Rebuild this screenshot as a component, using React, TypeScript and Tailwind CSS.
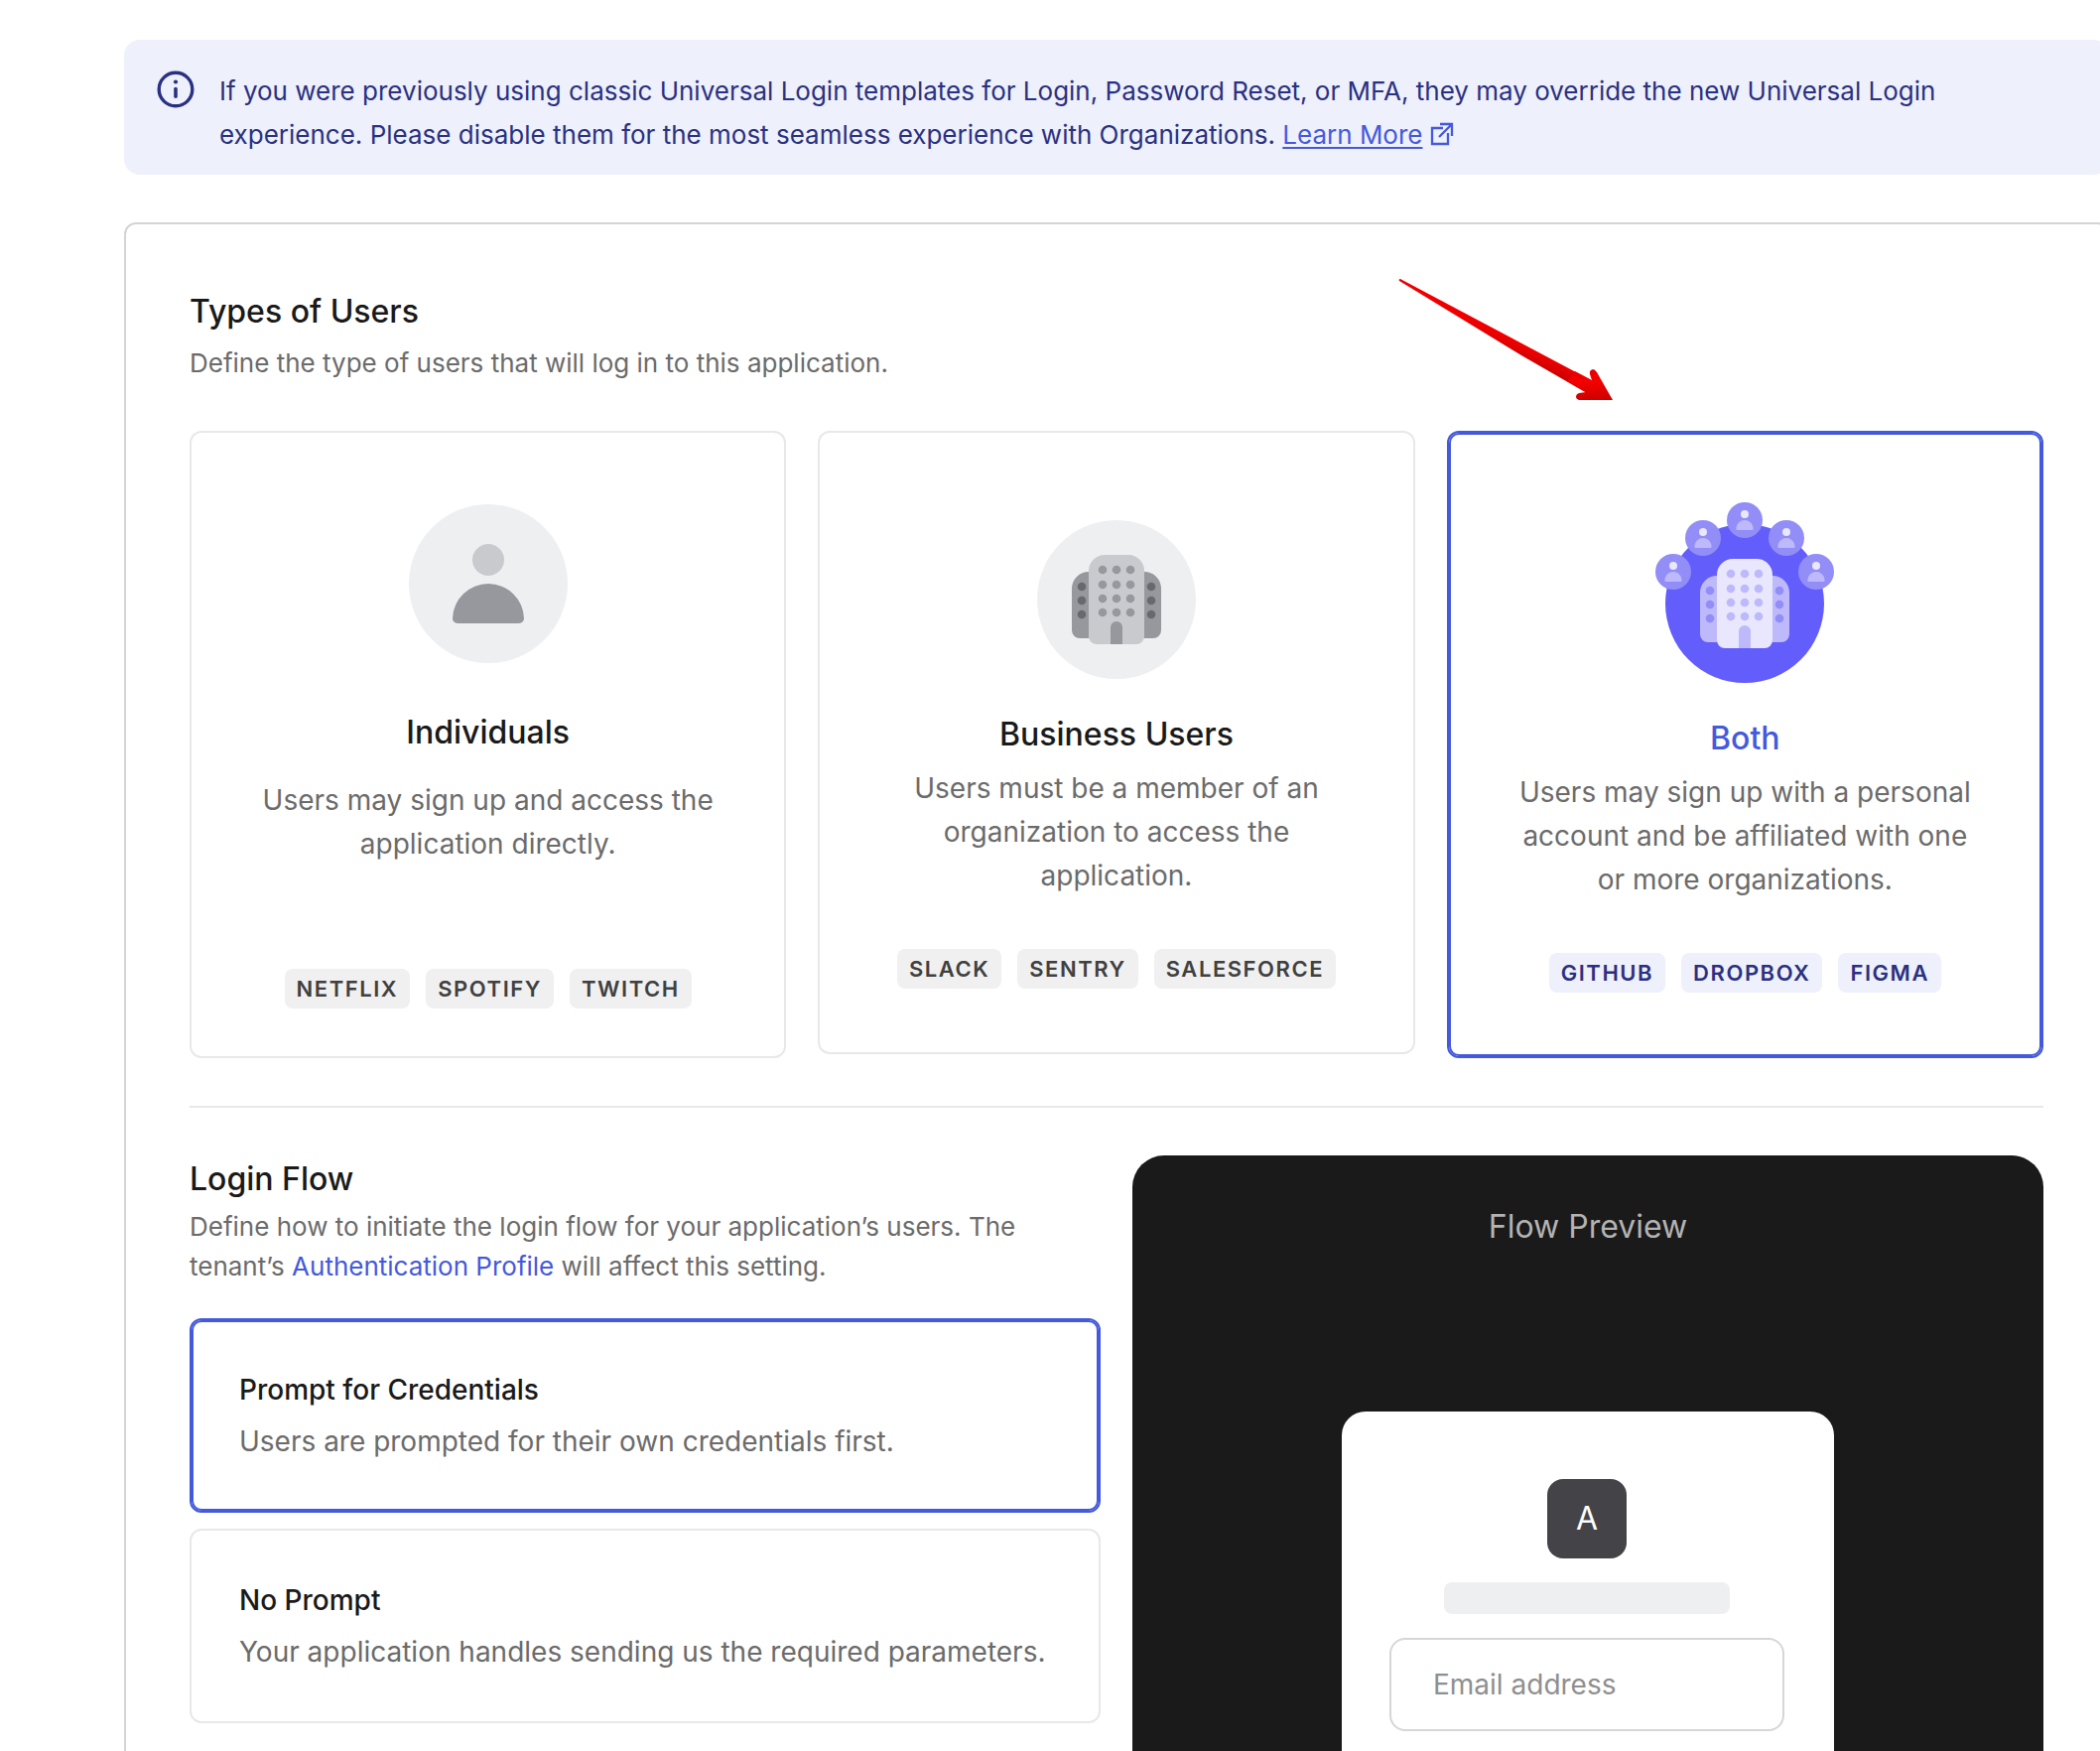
import React from "react";

const dotRows = [15, 30, 44, 58];
const sideRows = [32, 46, 60];

type Palette = { wall: string; windows: string; wing: string; wingWindows: string };

/* Office building, 90 x 90 units, drawn from its top-left corner. */
function Building({ c }: { c: Palette }) {
  return (
    <g>
      <path d="M17 17h0.500v67H8a8 8 0 0 1-8-8V34A17 17 0 0 1 17 17z" fill={c.wing} />
      <path d="M73 17h-0.500v67H82a8 8 0 0 0 8-8V34A17 17 0 0 0 73 17z" fill={c.wing} />
      <path d="M33 0h24a16 16 0 0 1 16 16v66a8 8 0 0 1-8 8H25a8 8 0 0 1-8-8V16A16 16 0 0 1 33 0z" fill={c.wall} />
      {dotRows.map((y) =>
        [31, 45, 59].map((x) => <circle key={`${x}-${y}`} cx={x} cy={y} r="4.300" fill={c.windows} />)
      )}
      {sideRows.map((y) =>
        [10, 80].map((x) => <circle key={`${x}-${y}`} cx={x} cy={y} r="4.300" fill={c.wingWindows} />)
      )}
      <path d="M39 90V73a6 6 0 0 1 12 0v17z" fill={c.windows} />
    </g>
  );
}

function IndividualIcon() {
  return (
    <svg width="160" height="160" viewBox="0 0 160 160" aria-hidden="true">
      <circle cx="80" cy="80" r="80" fill="#eeeff1" />
      <circle cx="80" cy="56" r="16" fill="#c9cace" />
      <path d="M80 80a36 36 0 0 1 36 35a5 5 0 0 1-5 5H49a5 5 0 0 1-5-5A36 36 0 0 1 80 80z" fill="#97989d" />
    </svg>
  );
}

function BusinessIcon() {
  return (
    <svg width="160" height="160" viewBox="0 0 160 160" aria-hidden="true">
      <circle cx="80" cy="80" r="80" fill="#eeeff1" />
      <g transform="translate(35 35)">
        <Building c={{ wall: "#c9cace", windows: "#97989d", wing: "#97989d", wingWindows: "#68696e" }} />
      </g>
    </svg>
  );
}

function BothIcon() {
  const people = [
    [18, 71],
    [48, 37],
    [90, 19],
    [132, 37],
    [162, 71],
  ];
  return (
    <svg width="180" height="183" viewBox="0 0 180 183" aria-hidden="true">
      <circle cx="90" cy="103" r="80" fill="#635dfb" />
      {people.map(([x, y]) => (
        <g key={x} transform={`translate(${x} ${y})`}>
          <circle r="18" fill="#928df7" />
          <circle cy="-6" r="4" fill="#e9e7fd" />
          <path d="M0 0a8.700 8.700 0 0 1 8.700 8.500q0 1.500-1.500 1.500H-7.200q-1.500 0-1.500-1.500A8.700 8.700 0 0 1 0 0z" fill="#bdb9fb" />
        </g>
      ))}
      <g transform="translate(45 58)">
        <Building c={{ wall: "#e9e7fd", windows: "#bdb9fb", wing: "#bdb9fb", wingWindows: "#928df7" }} />
      </g>
    </svg>
  );
}

function InfoIcon() {
  return (
    <svg className="shrink-0" width="40" height="40" viewBox="0 0 40 40" fill="none" aria-hidden="true">
      <circle cx="20" cy="20" r="16.800" stroke="#2a3182" strokeWidth="3.400" />
      <circle cx="20" cy="12.500" r="2.100" fill="#2a3182" />
      <path d="M20 19.500v7.800" stroke="#2a3182" strokeWidth="3.600" strokeLinecap="round" />
    </svg>
  );
}

function ExternalIcon() {
  return (
    <svg
      className="ml-2 inline-block align-[-3px]"
      width="26"
      height="26"
      viewBox="0 0 26 26"
      fill="none"
      stroke="#4459dc"
      strokeWidth="2.300"
      aria-hidden="true"
    >
      <path d="M13 7H2v16h16V12" />
      <path d="M10 3h12v12M22 3L9 16" />
    </svg>
  );
}

function Arrow() {
  return (
    <svg className="absolute top-[54px] left-[1282px]" width="220" height="128" viewBox="0 0 220 128" aria-hidden="true">
      <defs>
        <linearGradient id="arrowFill" gradientUnits="userSpaceOnUse" x1="120" y1="50" x2="108" y2="76">
          <stop offset="0" stopColor="#ee0000" />
          <stop offset="0.500" stopColor="#ee0000" />
          <stop offset="1" stopColor="#c80000" />
        </linearGradient>
        <linearGradient id="headFill" gradientUnits="userSpaceOnUse" x1="190" y1="92" x2="190" y2="123">
          <stop offset="0" stopColor="#e60000" />
          <stop offset="0.400" stopColor="#f40000" />
          <stop offset="1" stopColor="#cc0000" />
        </linearGradient>
      </defs>
      <path d="M2 1L196 104L190 116L124 78L1 3Q0 1 2 1z" fill="url(#arrowFill)" />
      <path
        d="M195 103L193 97Q192 93 196 92Q198 92 200 95L216 123H182Q179 122 179 120Q179 117 182 116L189 115L170 104L178 94z"
        fill="url(#headFill)"
      />
    </svg>
  );
}

type UserType = {
  id: string;
  title: string;
  text: string;
  tags: string[];
  icon: React.ReactNode;
  box: string;
  titleStyle: string;
  tagRow: string;
};

const userTypes: UserType[] = [
  {
    id: "individuals",
    title: "Individuals",
    text: "Users may sign up and access the application directly.",
    tags: ["NETFLIX", "SPOTIFY", "TWITCH"],
    icon: <IndividualIcon />,
    box: "pt-[72px] pb-12",
    titleStyle: "mt-[50px] mb-[26px]",
    tagRow: "mt-[104px]",
  },
  {
    id: "business",
    title: "Business Users",
    text: "Users must be a member of an organization to access the application.",
    tags: ["SLACK", "SENTRY", "SALESFORCE"],
    icon: <BusinessIcon />,
    box: "pt-[88px] pb-16",
    titleStyle: "mt-9 mb-3",
    tagRow: "mt-[52px]",
  },
  {
    id: "both",
    title: "Both",
    text: "Users may sign up with a personal account and be affiliated with one or more organizations.",
    tags: ["GITHUB", "DROPBOX", "FIGMA"],
    icon: <BothIcon />,
    box: "pt-[69px] pb-16",
    titleStyle: "mt-9 mb-3",
    tagRow: "mt-[52px]",
  },
];

function UserTypeCard({ type, selected, onSelect }: { type: UserType; selected: boolean; onSelect: () => void }) {
  return (
    <button
      type="button"
      aria-pressed={selected}
      onClick={onSelect}
      className={`flex flex-1 basis-0 cursor-pointer flex-col items-center rounded-xl border-2 px-16 text-center ${type.box} ${
        selected ? "border-[#4459dc] inset-ring-2 inset-ring-[#4459dc]" : "border-[#e8e8e8]"
      }`}
    >
      {type.icon}
      <span className={`text-[32px] leading-10 font-medium ${type.titleStyle} ${selected ? "text-[#4459dc]" : "text-[#1a1a1a]"}`}>
        {type.title}
      </span>
      <span className="text-[28px] leading-11 text-[#6b6b6b]">{type.text}</span>
      <span className={`flex gap-4 ${type.tagRow}`}>
        {type.tags.map((tag) => (
          <span
            key={tag}
            className={`rounded-lg px-3 text-[22px] leading-10 font-semibold tracking-[0.07em] ${
              selected ? "bg-[#eef0fc] text-[#2a3182]" : "bg-[#f0f0f0] text-[#404040]"
            }`}
          >
            {tag}
          </span>
        ))}
      </span>
    </button>
  );
}

const flows = [
  { id: "credentials", title: "Prompt for Credentials", text: "Users are prompted for their own credentials first." },
  { id: "none", title: "No Prompt", text: "Your application handles sending us the required parameters." },
];

export default function App() {
  const [userType, setUserType] = React.useState("both");
  const [flow, setFlow] = React.useState("credentials");

  return (
    <div className="h-screen overflow-hidden bg-white font-['Inter',sans-serif] text-[#1a1a1a]">
      <div className="-mr-[9px] flex flex-col gap-12 pt-10 pl-[125px]">
        <div role="note" className="flex gap-6 rounded-2xl bg-[#eef0fc] pt-[30px] pr-40 pb-[18px] pl-8 text-[26px] leading-11 text-[#2a3182]">
          <InfoIcon />
          <p>
            If you were previously using classic Universal Login templates for Login, Password Reset, or MFA, they may override the new
            Universal Login experience. Please disable them for the most seamless experience with Organizations.{" "}
            <a href="#learn-more" className="text-[#4459dc]">
              <span className="underline decoration-2 underline-offset-3">Learn More</span>
              <ExternalIcon />
            </a>
          </p>
        </div>

        <main className="relative rounded-xl border-2 border-[#d4d4d4] px-16 pt-16 pb-16">
          <Arrow />
          <section>
            <h2 className="text-[32px] leading-12 font-medium">Types of Users</h2>
            <p className="mt-1.5 text-[26px] leading-11 text-[#6b6b6b]">Define the type of users that will log in to this application.</p>
            <div className="mt-[46px] flex items-start gap-8">
              {userTypes.map((type) => (
                <UserTypeCard key={type.id} type={type} selected={type.id === userType} onSelect={() => setUserType(type.id)} />
              ))}
            </div>
          </section>

          <hr className="my-12 border-t-2 border-[#e8e8e8]" />

          <section className="grid grid-cols-2 gap-8">
            <div>
              <h2 className="text-[32px] leading-12 font-medium">Login Flow</h2>
              <p className="mt-1 text-[26px] leading-10 text-[#6b6b6b]">
                Define how to initiate the login flow for your application’s users. The tenant’s{" "}
                <a href="#authentication-profile" className="text-[#4459dc]">
                  Authentication Profile
                </a>{" "}
                will affect this setting.
              </p>
              <div className="mt-8 flex flex-col gap-4">
                {flows.map((item) => (
                  <button
                    key={item.id}
                    type="button"
                    aria-pressed={item.id === flow}
                    onClick={() => setFlow(item.id)}
                    className={`flex cursor-pointer flex-col gap-2 rounded-xl border-2 p-12 text-left text-[28px] leading-11 ${
                      item.id === flow ? "border-[#4459dc] inset-ring-2 inset-ring-[#4459dc]" : "border-[#e8e8e8]"
                    }`}
                  >
                    <span className="font-medium">{item.title}</span>
                    <span className="text-[#6b6b6b]">{item.text}</span>
                  </button>
                ))}
              </div>
            </div>

            <div className="flex flex-col items-center rounded-[32px] bg-[#1a1a1a] pt-12">
              <h3 className="text-[32px] leading-12 text-[#b3b3b3]">Flow Preview</h3>
              <div className="mt-[162px] flex w-[496px] flex-col items-center gap-6 rounded-3xl bg-white pt-[68px] pr-[50px] pb-32 pl-12">
                <div className="flex size-20 items-center justify-center rounded-2xl bg-[#444448] text-[32px] text-white">A</div>
                <div className="h-8 w-72 rounded-lg bg-[#eeeff1]" />
                <input
                  type="email"
                  aria-label="Email address"
                  placeholder="Email address"
                  className="h-[94px] w-full rounded-2xl border-2 border-[#d6d6d6] px-[42px] text-[28px] placeholder:text-[#8f8f8f]"
                />
              </div>
            </div>
          </section>
        </main>
      </div>
    </div>
  );
}
